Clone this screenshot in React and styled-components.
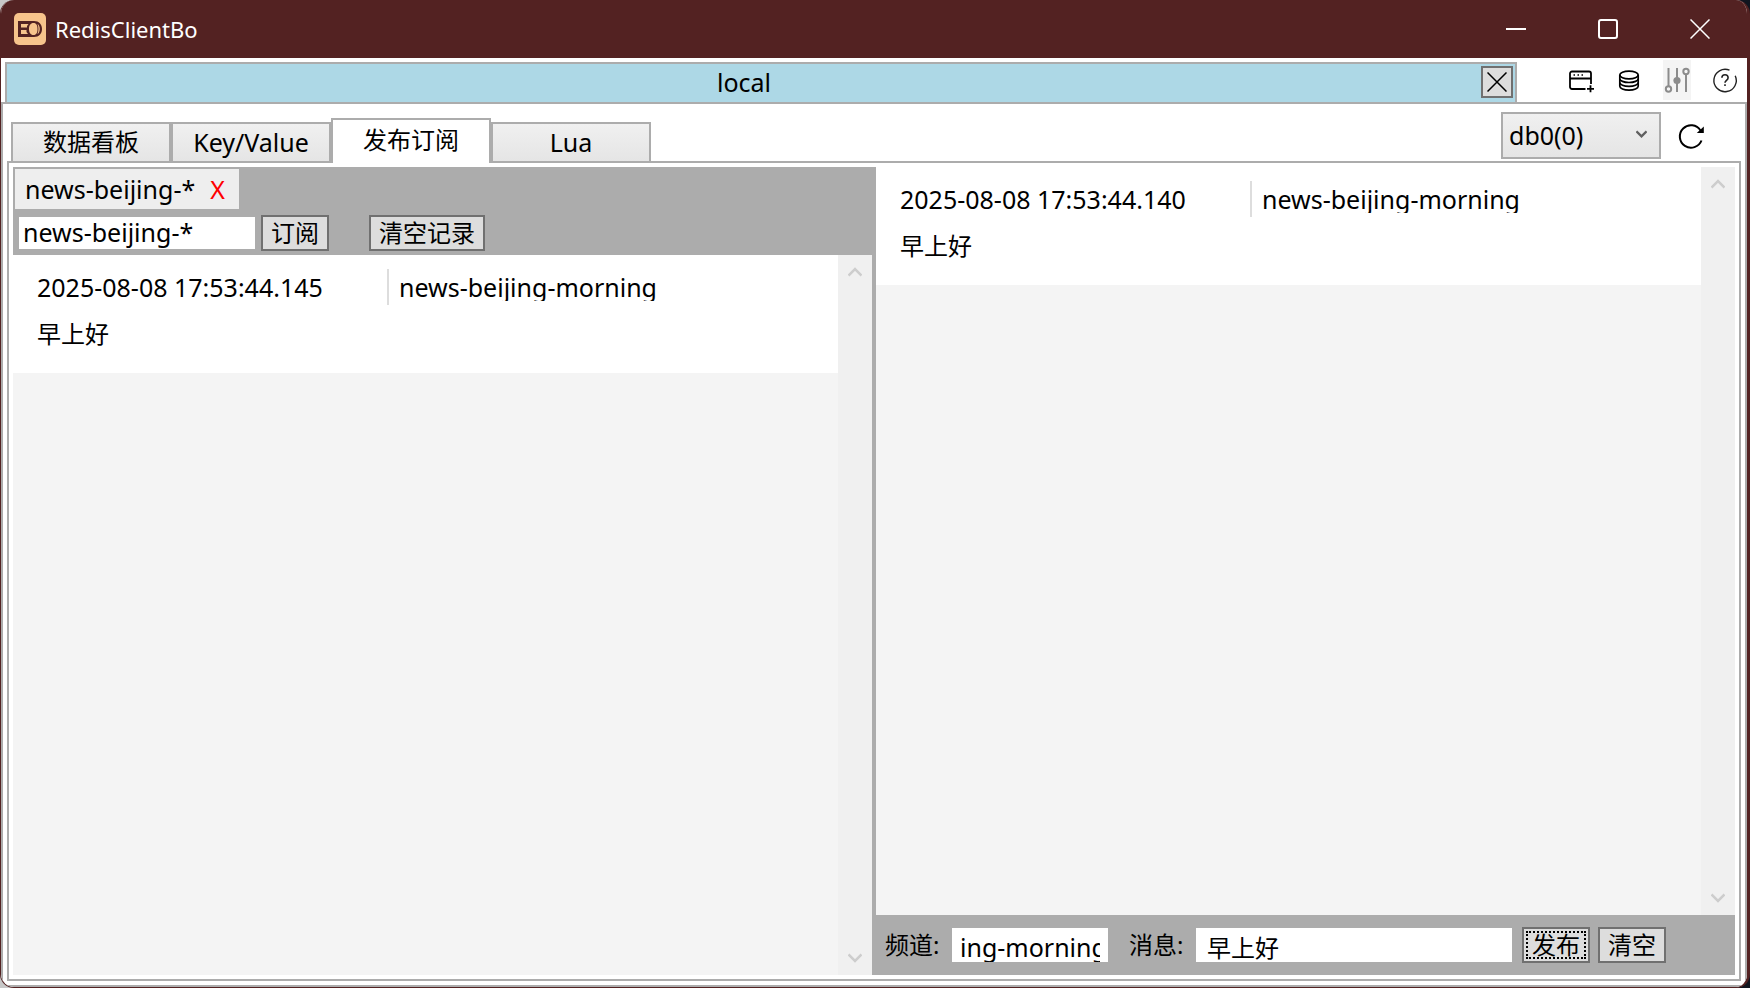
import React from "react";
import styled, { createGlobalStyle, css } from "styled-components";

const GlobalStyle = createGlobalStyle`
  *, *::before, *::after { box-sizing: border-box; }
  body {
    margin: 0;
    background: linear-gradient(90deg, #c8c8c8 50%, #10151f 50%);
    color: #000;
    font: 25px/32px "Noto Sans", "Noto Sans CJK SC", sans-serif;
  }
  button, input, select { font: inherit; color: inherit; margin: 0; border-radius: 0; }
`;

const LINE = "#acacac";

const Window = styled.main`
  min-height: 100vh;
  display: flex;
  flex-direction: column;
  background: #fff;
  border: 1px solid #532222;
  border-top-width: 0;
  border-right-width: 3px;
  border-radius: 14px;
  overflow: hidden;
`;

const TitleBar = styled.header`
  display: flex;
  align-items: center;
  height: 58px;
  padding: 0 1px 0 13px;
  background: #532222;
  color: #fff;
`;

const AppName = styled.h1`
  flex: 1;
  margin: 0 0 0 9px;
  font-size: 22px;
  font-weight: 400;
`;

const PlainButton = styled.button`
  display: flex;
  align-items: center;
  justify-content: center;
  padding: 0;
  border: 0;
  background: none;
`;

const CaptionButton = styled(PlainButton)`
  width: 92px;
  height: 58px;
`;

const ConnectionBar = styled.div`
  display: flex;
  height: 44px;
  padding: 4px 0 0 4px;
`;

const ConnectionTab = styled.div`
  flex: 1;
  display: flex;
  align-items: center;
  border: 2px solid ${LINE};
  border-bottom: 0;
  background: #add8e6;
  padding: 0 2px 2px 0;
`;

const ConnectionName = styled.span`
  flex: 1;
  text-align: center;
`;

const CloseConnection = styled(PlainButton)`
  width: 32px;
  height: 32px;
  border: 2px solid #707070;
  background: #ddd;
`;

const Tools = styled.nav`
  display: flex;
  align-items: center;
  gap: 20px;
  margin: -2px 8px 2px 50px;
`;

const ToolButton = styled(PlainButton)`
  width: 28px;
  height: 40px;
  background: ${(p) => (p.$disabled ? "#f4f4f4" : "none")};
`;

const OuterPane = styled.section`
  flex: 1;
  display: flex;
  flex-direction: column;
  border: 2px solid ${LINE};
  padding: 8px 4px 4px;
`;

const TabRow = styled.div`
  display: flex;
  align-items: flex-end;
  height: 51px;
  padding-left: 4px;
  margin-bottom: -2px;
`;

const tabSelected = css`
  height: 45px;
  border-bottom: 0;
  background: #fff;
  padding-bottom: 4px;
`;

const Tab = styled.button`
  position: relative;
  width: 160px;
  height: 41px;
  padding: 0 0 2px;
  border: 2px solid ${LINE};
  background: linear-gradient(#f0f0f0, #e5e5e5);
  font-size: ${(p) => (p.$cjk ? 24 : 25)}px;
  line-height: 32px;
  ${(p) => p.$selected && tabSelected}
`;

const TabTools = styled.div`
  display: flex;
  align-items: center;
  align-self: flex-start;
  gap: 16px;
  margin: 0 36px 0 auto;
`;

const DbPicker = styled.label`
  position: relative;
  display: block;
  width: 160px;
  height: 47px;

  svg { position: absolute; right: 14px; top: 17px; pointer-events: none; }
`;

const DbSelect = styled.select`
  appearance: none;
  width: 100%;
  height: 100%;
  padding: 0 6px 2px;
  border: 2px solid ${LINE};
  background: linear-gradient(#f0f0f0, #e5e5e5);
`;

const InnerPane = styled.div`
  flex: 1;
  display: grid;
  grid-template-columns: minmax(0, 1fr) 4px minmax(0, 1fr);
  border: 2px solid ${LINE};
  padding: 4px;
`;

const Splitter = styled.div`
  background: ${LINE};
`;

const Panel = styled.section`
  display: flex;
  flex-direction: column;
`;

const SubscribeBar = styled.div`
  height: 88px;
  padding: 2px;
  background: ${LINE};
`;

const ChannelChip = styled.div`
  display: flex;
  align-items: center;
  justify-content: space-between;
  width: 224px;
  height: 40px;
  padding: 0 14px 0 10px;
  background: #eee;
`;

const RemoveChannel = styled(PlainButton)`
  color: #f00;
  line-height: 32px;
`;

const SubscribeForm = styled.form`
  display: flex;
  align-items: center;
  height: 36px;
  margin: 6px 0 0 4px;
`;

const TextBox = styled.input`
  width: 236px;
  height: 32px;
  border: 0;
  background: #fff;
  padding: 0 4px 3px;
`;

const PublishBox = styled(TextBox)`
  width: 156px;
  height: 34px;
  padding: 3px 8px 0;
`;

const MessageBox = styled(PublishBox)`
  flex: 1;
  width: auto;
  min-width: 0;
  padding: 2px 11px 0;
  font-size: 24px;
`;

const Button = styled.button`
  height: 36px;
  margin-left: ${(p) => p.$gap}px;
  padding: 0 8px;
  border: 2px solid #707070;
  background: #ddd;
  font-size: 24px;
  line-height: 32px;
  white-space: nowrap;
  ${(p) => p.$focused && "outline: 2px dotted #000; outline-offset: -6px;"}
`;

const ListArea = styled.div`
  flex: 1;
  display: flex;
  background: #f4f4f4;
`;

const Messages = styled.ul`
  flex: 1;
  margin: 0;
  padding: 0;
  list-style: none;
`;

const Message = styled.li`
  height: 118px;
  padding: 14px 24px 0;
  background: #fff;
`;

const MessageHead = styled.div`
  display: flex;
  height: 36px;
`;

const Time = styled.time`
  width: 350px;
  line-height: 36px;
`;

const Channel = styled.div`
  border-left: 2px solid #ddd;
  padding-left: 10px;

  span { display: block; height: 32px; line-height: 36px; overflow: hidden; }
`;

const MessageText = styled.p`
  margin: 13px 0 0;
  font-size: 24px;
  line-height: 32px;
`;

const ScrollBar = styled.div`
  display: flex;
  flex-direction: column;
  justify-content: space-between;
  width: 34px;
  background: #f0f0f0;
`;

const ScrollButton = styled(PlainButton)`
  height: 34px;
`;

const PublishBar = styled.form`
  display: flex;
  align-items: center;
  height: 60px;
  padding: 0 69px 0 9px;
  background: ${LINE};
`;

const FieldLabel = styled.label`
  width: 67px;
  font-size: 24px;
  white-space: nowrap;

  input + & { margin-left: 21px; }
`;

function Logo() {
  return (
    <svg width="32" height="32" viewBox="0 0 32 32" aria-hidden="true">
      <rect width="32" height="32" rx="5" fill="#f7c48c" />
      <path
        fill="#532222"
        fillRule="evenodd"
        d="M4 8H20c5 0 8 3.500 8 8s-3 8-8 8H4zM7 11v3.500h6v-1.500l1.500-2zM7 17v4h7l-1.500-2v-2zM19.500 10c-3 0-4.500 2.500-4.500 6s1.500 6 4.500 6 4-2.500 4-6-1-6-4-6zM23.500 11c1.300 3 1.300 7 0 10 3-1.500 3-8.500 0-10z"
      />
    </svg>
  );
}

function Cross({ size, color, width = 1.5 }) {
  return (
    <svg width={size} height={size} viewBox="0 0 20 20" fill="none" stroke={color} strokeWidth={width} aria-hidden="true">
      <path d="M0.500 0.500l19 19M19.500 0.500l-19 19" />
    </svg>
  );
}

function NewWindowIcon() {
  return (
    <svg width="28" height="28" viewBox="0 0 28 28" fill="none" stroke="#000" strokeWidth="1.800" aria-hidden="true">
      <path d="M18.500 23H5a2 2 0 0 1-2-2V7.500a2 2 0 0 1 2-2h17a2 2 0 0 1 2 2V18M3 12.500h21" />
      <path d="M6.500 9H8M10.500 9H12M14.500 9H16" strokeWidth="1.600" />
      <path d="M20 22.800h7M23.500 19.300v7" />
    </svg>
  );
}

function DatabaseIcon() {
  return (
    <svg width="28" height="28" viewBox="0 0 28 28" fill="none" stroke="#000" strokeWidth="1.700" aria-hidden="true">
      <ellipse cx="14" cy="9" rx="9.200" ry="3.800" />
      <path d="M4.800 9v11.300c0 2.100 4 3.800 9.200 3.800s9.200-1.700 9.200-3.800V9" />
      <path d="M4.800 12.700c0 2.100 4 3.800 9.200 3.800s9.200-1.700 9.200-3.800M4.800 16.500c0 2.100 4 3.800 9.200 3.800s9.200-1.700 9.200-3.800" />
    </svg>
  );
}

function SlidersIcon() {
  return (
    <svg width="28" height="28" viewBox="0 0 28 28" fill="none" stroke="#8c8c8c" strokeWidth="2" aria-hidden="true">
      <path d="M5.500 2v18M14 2v24M23 8v18" />
      <circle cx="5.500" cy="23" r="2.700" />
      <circle cx="23" cy="5.500" r="2.700" />
      <circle cx="14" cy="14.500" r="3.600" fill="#8c8c8c" stroke="none" />
    </svg>
  );
}

function HelpIcon() {
  return (
    <svg width="28" height="28" viewBox="0 0 28 28" fill="none" stroke="#222" strokeWidth="1.400" aria-hidden="true">
      <path d="M18.500 4.200A11.200 11.200 0 1 0 24.200 9.700" />
      <path d="M10.900 11.800c0-4 6.200-4 6.200 0 0 2.500-3.100 2.700-3.100 5M14 18.300v1.800" strokeWidth="1.600" />
    </svg>
  );
}

function RefreshIcon() {
  return (
    <svg width="28" height="28" viewBox="0 0 28 28" fill="none" stroke="#000" strokeWidth="2" aria-hidden="true">
      <path d="M24.500 18.500A11.200 11.200 0 1 1 23.500 8.500" />
      <path d="M26.800 4.500v6.500h-7z" fill="#000" stroke="none" />
    </svg>
  );
}

function Chevron({ up, color = "#cdcdcd", width = 14, stroke = 2.5 }) {
  return (
    <svg width={width} height="10" viewBox="0 0 14 10" fill="none" stroke={color} strokeWidth={stroke} aria-hidden="true">
      <path d={up ? "M0.500 8.500L7 2l6.500 6.500" : "M0.500 1.500L7 8l6.500-6.500"} />
    </svg>
  );
}

function MessageList({ time, channel, text }) {
  return (
    <ListArea>
      <Messages>
        <Message>
          <MessageHead>
            <Time>{time}</Time>
            <Channel><span>{channel}</span></Channel>
          </MessageHead>
          <MessageText>{text}</MessageText>
        </Message>
      </Messages>
      <ScrollBar>
        <ScrollButton aria-label="向上滚动"><Chevron up /></ScrollButton>
        <ScrollButton aria-label="向下滚动"><Chevron /></ScrollButton>
      </ScrollBar>
    </ListArea>
  );
}

export default function App() {
  const stop = (e) => e.preventDefault();
  return (
    <>
      <GlobalStyle />
      <Window>
        <TitleBar>
          <Logo />
          <AppName>RedisClientBo</AppName>
          <CaptionButton aria-label="最小化">
            <svg width="20" height="20"><path d="M0 10h20" stroke="#fff" strokeWidth="2" /></svg>
          </CaptionButton>
          <CaptionButton aria-label="最大化">
            <svg width="20" height="20"><rect x="1" y="1" width="18" height="18" rx="2" fill="none" stroke="#fff" strokeWidth="2" /></svg>
          </CaptionButton>
          <CaptionButton aria-label="关闭"><Cross size="20" color="#fff" /></CaptionButton>
        </TitleBar>

        <ConnectionBar>
          <ConnectionTab>
            <ConnectionName>local</ConnectionName>
            <CloseConnection aria-label="关闭连接"><Cross size="20" color="#000" /></CloseConnection>
          </ConnectionTab>
          <Tools>
            <ToolButton aria-label="新建窗口"><NewWindowIcon /></ToolButton>
            <ToolButton aria-label="数据库"><DatabaseIcon /></ToolButton>
            <ToolButton aria-label="设置" $disabled><SlidersIcon /></ToolButton>
            <ToolButton aria-label="帮助"><HelpIcon /></ToolButton>
          </Tools>
        </ConnectionBar>

        <OuterPane>
          <TabRow>
            <Tab $cjk>数据看板</Tab>
            <Tab>Key/Value</Tab>
            <Tab $cjk $selected>发布订阅</Tab>
            <Tab>Lua</Tab>
            <TabTools>
              <DbPicker>
                <DbSelect aria-label="数据库" defaultValue="db0"><option value="db0">db0(0)</option></DbSelect>
                <Chevron color="#606060" width={11} stroke={3} />
              </DbPicker>
              <PlainButton aria-label="刷新"><RefreshIcon /></PlainButton>
            </TabTools>
          </TabRow>

          <InnerPane>
            <Panel>
              <SubscribeBar>
                <ChannelChip>
                  news-beijing-*
                  <RemoveChannel aria-label="移除频道">X</RemoveChannel>
                </ChannelChip>
                <SubscribeForm onSubmit={stop}>
                  <TextBox aria-label="订阅频道" defaultValue="news-beijing-*" />
                  <Button $gap={6}>订阅</Button>
                  <Button $gap={40} type="button">清空记录</Button>
                </SubscribeForm>
              </SubscribeBar>
              <MessageList time="2025-08-08 17:53:44.145" channel="news-beijing-morning" text="早上好" />
            </Panel>
            <Splitter />
            <Panel>
              <MessageList time="2025-08-08 17:53:44.140" channel="news-beijing-morning" text="早上好" />
              <PublishBar onSubmit={stop}>
                <FieldLabel htmlFor="channel">频道:</FieldLabel>
                <PublishBox id="channel" defaultValue="ing-morning" />
                <FieldLabel htmlFor="message">消息:</FieldLabel>
                <MessageBox id="message" defaultValue="早上好" />
                <Button $gap={10} $focused>发布</Button>
                <Button $gap={8} type="button">清空</Button>
              </PublishBar>
            </Panel>
          </InnerPane>
        </OuterPane>
      </Window>
    </>
  );
}
